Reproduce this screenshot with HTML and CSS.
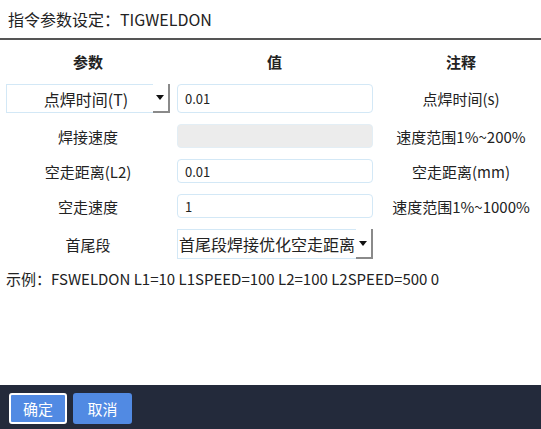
FILE: index.html
```html
<!DOCTYPE html>
<html lang="zh">
<head>
<meta charset="utf-8">
<title>指令参数设定</title>
<link rel="stylesheet" href="styles.css">
</head>
<body>
<div class="dialog">
  <div class="title">指令参数设定：TIGWELDON</div>
  <div class="content">
    <div class="grid">
      <div class="head">参数</div>
      <div class="head">值</div>
      <div class="head note">注释</div>

      <div class="cell"><div class="select sel-param"><span class="sel-text center">点焊时间(T)</span><span class="arrow"></span></div></div>
      <div class="cell"><div class="input">0.01</div></div>
      <div class="cell note">点焊时间(s)</div>

      <div class="cell label">焊接速度</div>
      <div class="cell"><div class="input short disabled"></div></div>
      <div class="cell note">速度范围1%~200%</div>

      <div class="cell label">空走距离(L2)</div>
      <div class="cell"><div class="input short">0.01</div></div>
      <div class="cell note">空走距离(mm)</div>

      <div class="cell label">空走速度</div>
      <div class="cell"><div class="input short">1</div></div>
      <div class="cell note">速度范围1%~1000%</div>

      <div class="cell label">首尾段</div>
      <div class="cell"><div class="select sel-value"><span class="sel-text">首尾段焊接优化空走距离</span><span class="arrow"></span></div></div>
      <div class="cell note"></div>
    </div>
    <div class="example">示例：FSWELDON L1=10 L1SPEED=100 L2=100 L2SPEED=500 0</div>
  </div>
  <div class="footer">
    <button class="btn btn-ok">确定</button>
    <button class="btn">取消</button>
  </div>
</div>
</body>
</html>
```
FILE: styles.css
```css
html, body {
  margin: 0;
  padding: 0;
  background: #ffffff;
}
body {
  font-family: "Noto Sans CJK SC", "Noto Sans", sans-serif;
  color: #222;
}
.dialog {
  width: 541px;
  height: 429px;
  display: flex;
  flex-direction: column;
}
.title {
  height: 40px;
  box-sizing: border-box;
  padding: 7px 0 0 8px;
  font-size: 16px;
  line-height: 24px;
  border-bottom: 2px solid #555555;
}
.content {
  flex: 1;
}
.grid {
  display: grid;
  grid-template-columns: 176px 197px 1fr;
  grid-template-rows: 33px 29px 24px 24px 24px 30px;
  row-gap: 11px;
}
.head {
  font-size: 15px;
  font-weight: bold;
  display: flex;
  align-items: center;
  justify-content: center;
  padding-top: 9px;
  height: 24px;
}
.head.note { padding-left: 8px; }
.cell {
  display: flex;
  align-items: center;
  font-size: 15px;
}
.label { justify-content: center; }
.note {
  justify-content: center;
  padding-left: 8px;
  font-size: 15px;
}
.input {
  box-sizing: border-box;
  width: 196px;
  height: 29px;
  margin-left: 1px;
  border: 1px solid #d3e8f6;
  border-radius: 4px;
  background: #fff;
  font-size: 13px;
  padding-left: 7px;
  display: flex;
  align-items: center;
}
.input.short { height: 24px; }
.input.disabled { background: #ececec; border-color: #e3eef5; }
.select {
  box-sizing: border-box;
  height: 29px;
  border: 1px solid #d3e8f6;
  background: #fff;
  display: flex;
  align-items: stretch;
}
.sel-param {
  width: 164px;
  margin-left: 6px;
}
.sel-value {
  width: 196px;
  height: 30px;
  margin-left: 1px;
}
.sel-text {
  flex: 1;
  font-size: 16px;
  display: flex;
  align-items: center;
  padding-left: 1px;
  white-space: nowrap;
  overflow: hidden;
}
.sel-text.center {
  justify-content: center;
  padding-left: 12px;
}
.arrow {
  width: 15px;
  border-right: 2px solid #8a8a8a;
  border-bottom: 2px solid #8a8a8a;
  margin: -1px -1px -1px 0;
  position: relative;
  background: #fff;
}
.arrow::after {
  content: "";
  position: absolute;
  left: 3px;
  top: 11px;
  border-left: 4px solid transparent;
  border-right: 4px solid transparent;
  border-top: 5px solid #111;
}
.sel-value .arrow::after { top: 12px; }
.example {
  margin-top: 9px;
  padding-left: 6px;
  font-size: 15px;
  line-height: 22px;
}
.footer {
  height: 44px;
  background: #232a3b;
  display: flex;
  align-items: center;
  gap: 6px;
  padding-left: 9px;
  padding-top: 3px;
  box-sizing: border-box;
}
.btn {
  font-family: "Noto Sans CJK SC", "Noto Sans", sans-serif;
  font-size: 15px;
  color: #fff;
  background: #518ae3;
  border: 2px solid #518ae3;
  border-radius: 3px;
  height: 31px;
  width: 59px;
  padding: 0;
  display: flex;
  align-items: center;
  justify-content: center;
}
.btn-ok {
  width: 58px;
  border-color: #ffffff;
}
```
